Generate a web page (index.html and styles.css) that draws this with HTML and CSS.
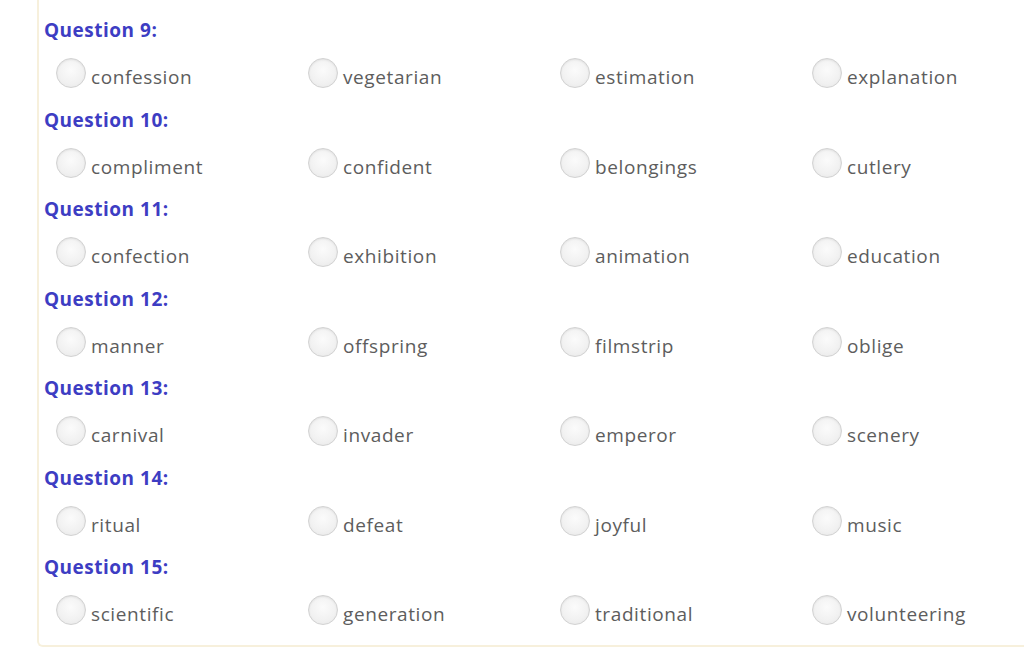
FILE: index.html
```html
<!DOCTYPE html>
<html>
<head>
<meta charset="utf-8">
<link rel="stylesheet" href="styles.css">
</head>
<body>
<div class="card">
  <div class="q">
    <div class="qtitle">Question 9:</div>
    <div class="opts">
      <label class="opt"><span class="radio"></span><span class="txt">confession</span></label>
      <label class="opt"><span class="radio"></span><span class="txt">vegetarian</span></label>
      <label class="opt"><span class="radio"></span><span class="txt">estimation</span></label>
      <label class="opt"><span class="radio"></span><span class="txt">explanation</span></label>
    </div>
  </div>
  <div class="q">
    <div class="qtitle">Question 10:</div>
    <div class="opts">
      <label class="opt"><span class="radio"></span><span class="txt">compliment</span></label>
      <label class="opt"><span class="radio"></span><span class="txt">confident</span></label>
      <label class="opt"><span class="radio"></span><span class="txt">belongings</span></label>
      <label class="opt"><span class="radio"></span><span class="txt">cutlery</span></label>
    </div>
  </div>
  <div class="q">
    <div class="qtitle">Question 11:</div>
    <div class="opts">
      <label class="opt"><span class="radio"></span><span class="txt">confection</span></label>
      <label class="opt"><span class="radio"></span><span class="txt">exhibition</span></label>
      <label class="opt"><span class="radio"></span><span class="txt">animation</span></label>
      <label class="opt"><span class="radio"></span><span class="txt">education</span></label>
    </div>
  </div>
  <div class="q">
    <div class="qtitle">Question 12:</div>
    <div class="opts">
      <label class="opt"><span class="radio"></span><span class="txt">manner</span></label>
      <label class="opt"><span class="radio"></span><span class="txt">offspring</span></label>
      <label class="opt"><span class="radio"></span><span class="txt">filmstrip</span></label>
      <label class="opt"><span class="radio"></span><span class="txt">oblige</span></label>
    </div>
  </div>
  <div class="q">
    <div class="qtitle">Question 13:</div>
    <div class="opts">
      <label class="opt"><span class="radio"></span><span class="txt">carnival</span></label>
      <label class="opt"><span class="radio"></span><span class="txt">invader</span></label>
      <label class="opt"><span class="radio"></span><span class="txt">emperor</span></label>
      <label class="opt"><span class="radio"></span><span class="txt">scenery</span></label>
    </div>
  </div>
  <div class="q">
    <div class="qtitle">Question 14:</div>
    <div class="opts">
      <label class="opt"><span class="radio"></span><span class="txt">ritual</span></label>
      <label class="opt"><span class="radio"></span><span class="txt">defeat</span></label>
      <label class="opt"><span class="radio"></span><span class="txt">joyful</span></label>
      <label class="opt"><span class="radio"></span><span class="txt">music</span></label>
    </div>
  </div>
  <div class="q">
    <div class="qtitle">Question 15:</div>
    <div class="opts">
      <label class="opt"><span class="radio"></span><span class="txt">scientific</span></label>
      <label class="opt"><span class="radio"></span><span class="txt">generation</span></label>
      <label class="opt"><span class="radio"></span><span class="txt">traditional</span></label>
      <label class="opt"><span class="radio"></span><span class="txt">volunteering</span></label>
    </div>
  </div>
</div>
</body>
</html>
```
FILE: styles.css
```css
html, body {
  margin: 0;
  padding: 0;
  background: #ffffff;
}
body {
  font-family: "Open Sans", "Noto Sans", sans-serif;
  overflow: hidden;
}
.card {
  margin-left: 37px;
  border: 2px solid #f7f0dc;
  border-top: none;
  border-right: none;
  border-radius: 0 0 0 6px;
  padding: 15px 0 3px 5px;
  background: #fff;
}
.q {
  height: 89.5px;
}
.qtitle {
  height: 30px;
  line-height: 30px;
  font-size: 19px;
  font-weight: 700;
  color: #3d3dc3;
  letter-spacing: 0.5px;
}
.opts {
  display: grid;
  grid-template-columns: repeat(4, 252px);
  padding-left: 12px;
  height: 59.5px;
}
.opt {
  display: flex;
  align-items: flex-start;
}
.radio {
  width: 28px;
  height: 28px;
  margin-top: 13px;
  border-radius: 50%;
  border: 1px solid #d2d2d2;
  background: radial-gradient(circle at 50% 40%, #fbfbfb 0%, #f1f1f1 60%, #e6e6e6 100%);
  box-shadow: inset 0 1px 2px rgba(0,0,0,0.08);
  flex: none;
}
.txt {
  margin-top: 20px;
  line-height: 24px;
  font-size: 19px;
  letter-spacing: 0.6px;
  color: #5d5d5d;
  padding-left: 5px;
}
```
